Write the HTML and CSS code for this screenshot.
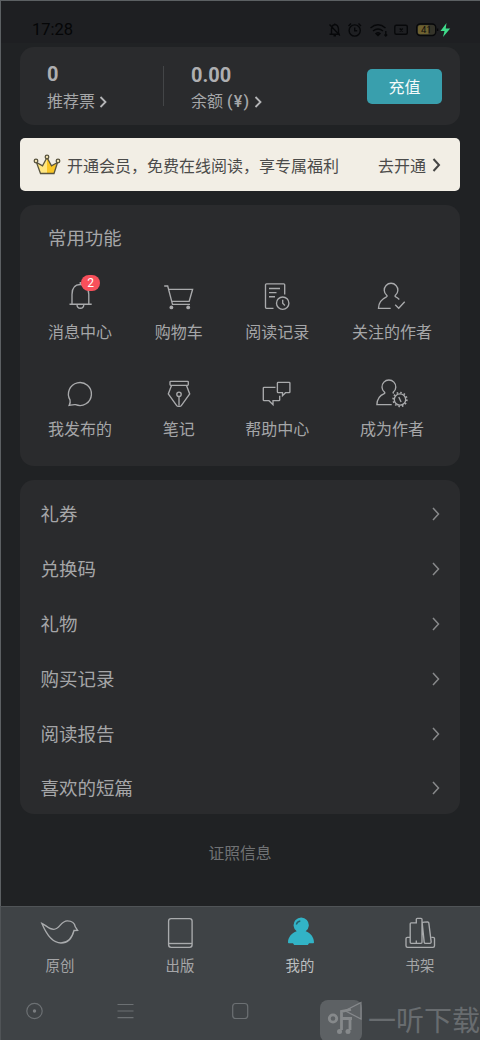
FILE: index.html
```html
<!DOCTYPE html>
<html lang="zh-CN">
<head>
<meta charset="utf-8">
<title>我的</title>
<link rel="stylesheet" href="styles.css">
</head>
<body>
<div class="screen">
  <header class="status">
    <span class="time">17:28</span>
    <svg class="status-icons" viewBox="324 20 128 20">
      <g class="dark-line">
        <path d="M329.500 34.200h10.500M331.500 33.500v-4.500q0-4 3.500-4.500q3 .3 3.500 4.500v4.500M334.700 24.500v-1M333.500 35.800h2.500M329.500 24.500l10.500 11"/>
        <circle cx="354.700" cy="30.500" r="5.600"/><path d="M354.700 27.500v3.200h2.500M348.500 26l2.500-2.500M361 26l-2.500-2.500"/>
        <path d="M370.500 28q7.500-6.500 15 0M373 31q5-4 10 0"/><path d="M376 33.500q2-1.500 4 0l-2 2zM385.800 31v5M384.500 34.500l1.300 1.500 1.300-1.500"/>
        <rect x="394.800" y="25.300" width="12.500" height="9" rx="1.500"/><path d="M399.700 28.500l3 3M402.700 28.500l-3 3"/>
      </g>
      <rect x="417" y="24.500" width="18.500" height="10.500" rx="3" fill="#35342a"/>
      <path d="M420 25.200h8.500v9H420q-2 0-2-2v-5q0-2 2-2z" fill="#6e6130"/>
      <rect class="dark-line" x="416.700" y="24" width="19" height="11.500" rx="3.500"/><path class="dark-line" d="M437.600 28.500v2.500"/>
      <text x="421" y="33.200" class="battery">41</text>
      <path d="M446.500 23l-6 8h4l-1.500 6 7.200-8.500h-4.500z" fill="#3fdc8b"/>
    </svg>
  </header>

  <main class="content">
    <section class="card wallet">
      <div class="asset ticket"><strong>0</strong><span>推荐票<svg class="chev" viewBox="0 0 8 12"><path d="M1.500 1l5 5-5 5"/></svg></span></div>
      <i class="divider"></i>
      <div class="asset money"><strong>0.00</strong><span>余额 <em>(¥)</em><svg class="chev" viewBox="0 0 8 12"><path d="M1.500 1l5 5-5 5"/></svg></span></div>
      <button class="recharge">充值</button>
    </section>

    <section class="vip">
      <svg class="crown" viewBox="33 153 28 23">
        <path d="M40.500 173.500L36.500 162.500 42.500 165.800 47 157.500 51.500 165.800 57.500 162.500 54 173.500Z" fill="#ffe680"/>
        <path d="M47 157.500L51.500 165.800 57.500 162.500 54 173.500H47Z" fill="#fac625"/>
        <path d="M40.500 173.500L36.500 162.500 42.500 165.800 47 157.500 51.500 165.800 57.500 162.500 54 173.500Z" class="crown-line"/>
        <g fill="#f6e7b4" class="crown-balls"><circle cx="36" cy="161" r="1.800"/><circle cx="47" cy="157" r="1.800"/><circle cx="58" cy="161" r="1.800"/></g>
      </svg>
      <span class="vip-text">开通会员，免费在线阅读，享专属福利</span>
      <span class="vip-go">去开通</span>
      <svg class="vip-chev" viewBox="0 0 9 14"><path d="M1.500 1l5.500 6-5.500 6"/></svg>
    </section>

    <section class="card tools">
      <h2>常用功能</h2>
      <div class="grid">
        <div class="tool"><svg viewBox="60 281 40 32"><path d="M69.500 304.200h22.200M72 304v-9.500c0-6.500 3-10 8.300-10s8.500 3.500 8.500 10v9.500M77 304.500c0 5 6.800 5 6.800 0M80.300 284.500v-2.500"/></svg><b class="badge">2</b><span>消息中心</span></div>
        <div class="tool"><svg viewBox="159 281 40 32"><path d="M164.200 286h3.500l4.800 18.300H190M168.800 289.300h23.800l-3.400 12H172"/><circle class="solid" cx="171.400" cy="307.400" r="1.900"/><circle class="solid" cx="188.200" cy="307.400" r="1.900"/></svg><span>购物车</span></div>
        <div class="tool"><svg viewBox="258 281 40 32"><path d="M274.500 308.300h-7q-1 0-1-1v-22.500q0-1 1-1h17.200q1 0 1 1v9.700M270 288.500h11M270 292.600h7.500M270 296.700h6"/><circle cx="283.700" cy="303.200" r="6.200"/><path d="M283.700 299.700v3.500l2.200 2.300"/></svg><span>阅读记录</span></div>
        <div class="tool"><svg viewBox="372 281 40 32"><path d="M390.700 308.300H378.500c0-5.500 2.500-9 8-11.500.8-.5.800-1 .2-1.500a6.800 6.800 0 1 1 8.700 0c-.5.500-.5 1 .3 1.500q2 1 3.600 2.600M395.200 304.800l3.500 3.500 6-6.600"/></svg><span>关注的作者</span></div>
        <div class="tool"><svg viewBox="60 378 40 32"><path d="M69.200 405.400c1-2 1.300-3.700.8-5.600a11.500 11.500 0 1 1 5.700 4.900c-2-.4-4 .2-6.500.7z"/></svg><span>我发布的</span></div>
        <div class="tool"><svg viewBox="159 378 40 32"><rect x="170" y="381.300" width="18.300" height="4" rx=".7"/><path d="M171.500 385.500l-3.200 8.500 8.400 11.600q.6.800 1.500.8h1.600q.9 0 1.500-.8l8.400-11.600-3.200-8.500M179 396.500v9"/><circle cx="179" cy="394.300" r="2.200"/></svg><span>笔记</span></div>
        <div class="tool"><svg viewBox="258 378 40 32"><path d="M276.500 387.300h-11.400q-.8 0-.8.800v11.800q0 .8.800.8h4.900l4 4v-4h5.900q.8 0 .8-.8v-4.200M279.200 382.300h10.900q.8 0 .8.800v8.800q0 .8-.8.800h-3.600l-3 3v-3h-4.300q-.8 0-.8-.8v-8.800q0-.8.800-.8z"/></svg><span>帮助中心</span></div>
        <div class="tool"><svg viewBox="372 378 40 32"><path d="M391.700 404.600H376.900c.2-5.500 2.300-9 7.300-11 .8-.5.800-1 .2-1.500a6.900 6.900 0 1 1 9 0c-.5.500-.3 1 .3 1.300"/><circle cx="400" cy="399.500" r="5.700"/><circle class="teeth" cx="400" cy="399.500" r="6.900"/><path d="M398.800 397l2.300 5"/></svg><span>成为作者</span></div>
      </div>
    </section>

    <section class="card list">
      <div class="row">礼券<svg viewBox="0 0 8 14"><path d="M1 1l5.500 6L1 13"/></svg></div>
      <div class="row">兑换码<svg viewBox="0 0 8 14"><path d="M1 1l5.500 6L1 13"/></svg></div>
      <div class="row">礼物<svg viewBox="0 0 8 14"><path d="M1 1l5.500 6L1 13"/></svg></div>
      <div class="row">购买记录<svg viewBox="0 0 8 14"><path d="M1 1l5.500 6L1 13"/></svg></div>
      <div class="row">阅读报告<svg viewBox="0 0 8 14"><path d="M1 1l5.500 6L1 13"/></svg></div>
      <div class="row">喜欢的短篇<svg viewBox="0 0 8 14"><path d="M1 1l5.500 6L1 13"/></svg></div>
    </section>
    <p class="license">证照信息</p>
  </main>

  <footer class="bottom">
    <nav class="tabs">
      <div class="tab"><svg viewBox="40 915 40 36"><path d="M41.800 923.300c4 1.500 6.500 6 12 6 6 0 7-8.500 13.500-8.500 4.500 0 7.300 2 8 6l2.300 3.500-3.600.2c-1.500 6-5.500 12.500-13 12.500-9 0-15-9.500-19.200-19.700z"/></svg><span>原创</span></div>
      <div class="tab"><svg viewBox="160 915 40 36"><rect x="168.600" y="918.600" width="23.500" height="28.700" rx="2.500"/><path d="M169 943.500h23"/></svg><span>出版</span></div>
      <div class="tab active"><svg viewBox="280 915 40 36"><path class="me" d="M296.700 931.300a7.600 7.600 0 1 1 9 0c5 1.700 8.300 6.200 8.300 11.200q0 .8-.8.800H309l-.8 1.300q-.3.500-1 .5h-12.400q-.7 0-1-.5l-.8-1.300h-4.200q-.8 0-.8-.8c0-5 3.500-9.500 8.700-11.200z"/><path class="glint" d="M296.300 924.500q.8-3 4-3.500"/></svg><span>我的</span></div>
      <div class="tab"><svg viewBox="400 915 40 36"><path d="M409.800 937.300h-2.500q-1.300 0-1.300 1.300v7.200q0 1.500 1.500 1.500h25.500q1.500 0 1.500-1.500v-7.200q0-1.300-1.300-1.300h-1.700M411.200 943.300q-1 0-1-1v-18.500q0-1 1-1h5.100v-3.500q0-1 1-1h3.700q1 0 1 1v23q0 1-1 1zM416.300 940.500v2.500M422.200 923q1-1 1.900-.9l3.500-.3q1 0 1.200 1l2.400 19.300q0 1-1 1.200h-4.800q-1 0-1.200-1l-2-19.300"/></svg><span>书架</span></div>
    </nav>
    <svg class="sysnav" viewBox="0 995 480 32">
      <circle cx="34.500" cy="1011" r="7.700"/><circle cx="34.500" cy="1011" r="1.700" class="dot"/>
      <path d="M117.500 1004.500h16M117.500 1011h16M117.500 1017.700h16"/>
      <rect x="232.700" y="1003.500" width="15" height="15" rx="3"/>
      <path class="back" d="M361 1002.500v16.500l-16-8.300z"/>
    </svg>
    <div class="watermark">
      <svg viewBox="0 0 42 42"><rect width="42" height="42" rx="8"/><circle cx="13" cy="18.500" r="3.700"/><path d="M31 9.500l-9.500 2v18.500M21.500 18.500H32M30 18.500v11.500"/><circle class="note" cx="19.500" cy="31.500" r="2.500"/><circle class="note" cx="28" cy="31.500" r="2.500"/></svg>
      <span>一听下载</span>
    </div>
  </footer>
</div>
</body>
</html>
```

FILE: styles.css
```css
* { box-sizing: border-box; }
body {
  margin: 0;
  font-family: Roboto, "Noto Sans CJK SC", sans-serif;
  color: #a5a6a8;
  background: #202224;
}
svg { display: block; fill: none; }
.screen {
  position: relative;
  width: 480px;
  height: 1040px;
  overflow: hidden;
  display: flex;
  flex-direction: column;
  background: #202224;
  box-shadow: inset 1px 1px #5c6063;
}
.status {
  height: 43px;
  flex: none;
  padding: 20px 28px 0 32px;
  display: flex;
  justify-content: space-between;
  background: #1e1f22;
  box-shadow: inset 1px 1px #5c6063;
}
.time { font-size: 16.5px; line-height: 20px; color: #050607; }
.status-icons { width: 128px; height: 20px; }
.dark-line { stroke: #07080a; stroke-width: 1.400; }
.battery { font-size: 9.500px; fill: #0e0e0c; }

.content {
  flex: 1;
  padding: 4px 20px 0;
  display: flex;
  flex-direction: column;
}
.card { background: #2a2b2d; border-radius: 14px; flex: none; }
.wallet { height: 78px; display: flex; align-items: center; padding: 0 18px 0 27px; }
.asset { display: flex; flex-direction: column; padding-top: 5px; }
.asset strong { font-size: 20px; font-weight: 700; line-height: 24px; color: #aeafb1; }
.asset span { display: flex; align-items: center; font-size: 16px; line-height: 24px; margin-top: 3px; white-space: pre; }
.asset em { font-style: normal; font-weight: 500; letter-spacing: 1.200px; }
.ticket { width: 116px; }
.ticket strong { position: relative; top: -1px; }
.divider { width: 1px; height: 40px; background: #434547; margin-right: 27px; }
.chev { width: 8px; height: 12px; margin-left: 4px; stroke: #b5b6b8; stroke-width: 1.800; }
.recharge {
  width: 75px; height: 35px; margin-left: auto; padding: 0;
  border: 0; border-radius: 5px;
  background: #399fad; color: #f4fafa;
  font: 16px/35px "Noto Sans CJK SC", sans-serif;
}

.vip {
  height: 53px; flex: none; margin: 13px 0 14px;
  display: flex; align-items: center;
  padding: 0 19px 0 13px;
  border-radius: 5px;
  background: #f2eee5; color: #4b4b4a;
  font: 16px/24px "Noto Sans CJK SC", sans-serif;
}
.crown { width: 28px; height: 23px; margin-right: 6px; }
.crown-line, .crown-balls { stroke: #59543f; stroke-width: 1.300; }
.vip-text { white-space: nowrap; }
.vip-go { margin-left: auto; }
.vip-chev { width: 9px; height: 14px; margin-left: 6px; stroke: #454544; stroke-width: 2; }

.tools { height: 261px; padding: 21px 28px 0; }
.tools h2 { margin: 0 0 29px; font-size: 18.400px; font-weight: 400; line-height: 26px; }
.grid {
  display: grid;
  grid-template-columns: 64px 48px 64px 80px;
  justify-content: space-between;
  row-gap: 17px;
}
.tool { position: relative; height: 80px; display: flex; flex-direction: column; align-items: center; }
.tool svg { flex: none; width: 40px; height: 32px; stroke: #a9aaac; stroke-width: 1.350; }
.tool span { font-size: 16px; line-height: 24px; margin-top: 8px; white-space: nowrap; }
.tool .solid { fill: #a9aaac; stroke: none; }
.tool .teeth { stroke-width: 1.600; stroke-dasharray: 1.600 2.013; }
.badge {
  position: absolute; left: 33px; top: -6px;
  width: 19px; height: 16px; border-radius: 8px;
  background: #f8505b; color: #fff;
  font-size: 12px; font-weight: 400; line-height: 17px; text-align: center;
}

.list { height: 334px; margin-top: 14px; padding: 7px 20px 0 20.500px; }
.row {
  height: 54.800px; padding-bottom: 2px;
  display: flex; align-items: center; justify-content: space-between;
  font-size: 18.500px;
}
.row svg { width: 8px; height: 14px; margin-top: 2px; stroke: #88898b; stroke-width: 1.500; }
.license { margin: 28px 0 0; text-align: center; font-size: 15.800px; line-height: 24px; color: #707274; }

.bottom { position: relative; height: 134px; flex: none; background: #3f4346; box-shadow: inset 1px 1px #505457; }
.tabs { display: grid; grid-template-columns: repeat(4, 1fr); padding-top: 9px; }
.tab { display: flex; flex-direction: column; align-items: center; font-size: 14.400px; line-height: 20px; }
.tab svg { width: 40px; height: 36px; stroke: #a9abad; stroke-width: 1.350; }
.tab span { margin-top: 6px; }
.tab.active { color: #bcbebf; }
.tab .me { fill: #32b3c6; stroke: none; }
.tab .glint { stroke: #25616b; }
.sysnav { width: 480px; height: 32px; margin-top: 18px; stroke: #6c7073; stroke-width: 1.200; }
.sysnav .dot { fill: #7a7d80; stroke: none; }
.sysnav .back { stroke: #7c7f82; }
.watermark { position: absolute; left: 320px; top: 92px; display: flex; align-items: center; color: #686c6f; }
.watermark svg { flex: none; width: 42px; height: 42px; stroke: #86898b; stroke-width: 2.800; }
.watermark rect { fill: #a0a3a5; fill-opacity: .32; stroke: none; }
.watermark .note { fill: #86898b; stroke: none; }
.watermark span { margin-left: 6px; padding-top: 3px; font-size: 28px; line-height: 42px; white-space: nowrap; }
```
